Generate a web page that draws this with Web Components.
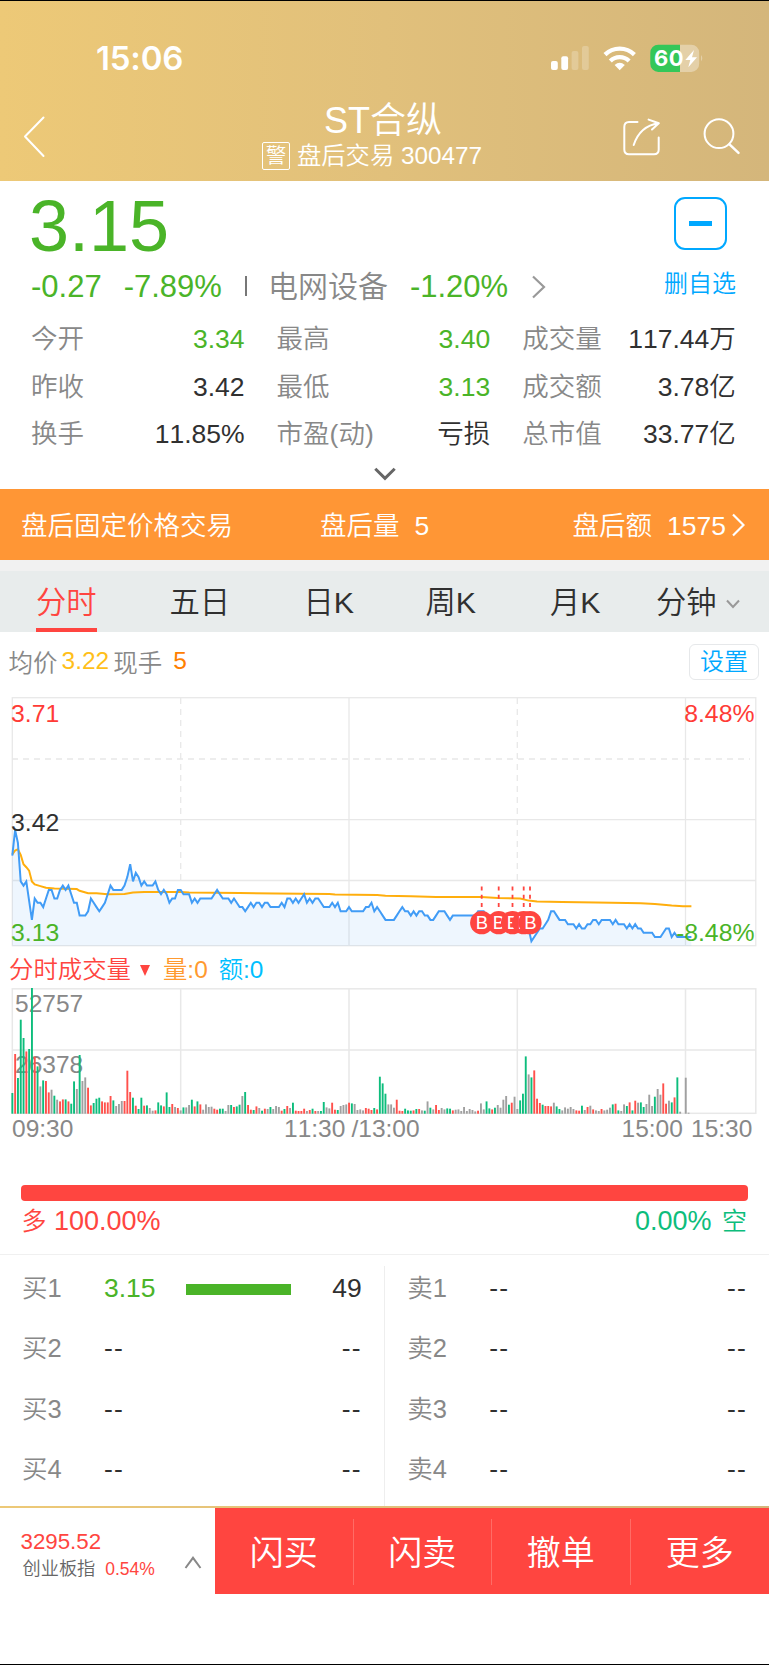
<!DOCTYPE html>
<html lang="zh-CN">
<head>
<meta charset="UTF-8">
<title>ST合纵 300477</title>
<style>
    html, body { margin: 0; padding: 0; background: #fff; }
    body {
        width: 769px;
        height: 1665px;
        overflow: hidden;
        font-family: "Liberation Sans", "Noto Sans CJK SC", sans-serif;
        font-weight: 350;
        font-kerning: none;
        --green: #4ab428;
        --red: #ff4540;
        --gray: #888;
        --ink: #303030;
        --blue: #00a8ff;
        --teal: #0dbd7c;
        --gold: linear-gradient(90deg, #edc977 0%, #e1c07b 50%, #d4b67b 100%);
    }
</style>
</head>
<body>
<stock-page></stock-page>
<script>
class StatusBar extends HTMLElement {
    constructor() {
        super();
        this.attachShadow({ mode: 'open' });
    }
    connectedCallback() {
        this.shadowRoot.innerHTML = `
            <style>
                :host {
                    display: flex;
                    justify-content: space-between;
                    align-items: center;
                    height: 113px;
                    padding: 1px 64px 0 96px;
                    box-sizing: border-box;
                    color: #fff;
                }
                .time {
                    font: 600 33px/40px Inter, sans-serif;
                    letter-spacing: -0.2px;
                }
                svg { display: block; }
            </style>
            <div class="time">15:06</div>
            <svg width="155" height="30" viewBox="550 42 155 30">
                <g fill="#fff">
                    <rect x="551" y="60" width="6.8" height="9" rx="2"/>
                    <rect x="561.3" y="55.3" width="6.8" height="13.7" rx="2"/>
                    <rect x="571.6" y="50" width="6.8" height="19" rx="2" opacity=".22"/>
                    <rect x="582" y="45" width="6.8" height="24" rx="2" opacity=".22"/>
                    <path d="M619.7 69.2 L614.6 63.9 Q619.7 59.4 624.8 63.9 Z"/>
                </g>
                <g fill="none" stroke="#fff" stroke-width="4.3">
                    <path d="M605 53.6 A21 21 0 0 1 634.4 53.6"/>
                    <path d="M610.3 60 A13.3 13.3 0 0 1 629.1 60"/>
                </g>
                <path d="M658.5 43.7 H680 V70.9 H658.5 A8 8 0 0 1 650.3 62.7 V52 A8 8 0 0 1 658.5 43.7Z" fill="#34c759"/>
                <path d="M680 43.7 H691 A8 8 0 0 1 699.2 52 V62.7 A8 8 0 0 1 691 70.9 H680Z" fill="#fff" opacity=".34"/>
                <path d="M701 54 Q703.6 57.2 701 60.5Z" fill="#fff" opacity=".34"/>
                <text x="654" y="65.3" font-family="Inter, sans-serif" font-weight="700" font-size="22" textLength="29.5" fill="#fff">60</text>
                <path d="M694 49 L685.3 59 H690.3 L688.3 66.3 L697 56.3 H692 Z" fill="#fff"/>
            </svg>
        `;
    }
}
customElements.define('status-bar', StatusBar);

class TitleBar extends HTMLElement {
    constructor() {
        super();
        this.attachShadow({ mode: 'open' });
    }
    connectedCallback() {
        this.shadowRoot.innerHTML = `
            <style>
                :host {
                    display: flex;
                    height: 82px;
                    margin-top: -14px;
                    padding: 0 27px 0 22px;
                    color: #fff;
                }
                svg { display: block; fill: none; stroke: #fff; stroke-width: 2; stroke-linecap: round; stroke-linejoin: round; }
                .back { margin: 15.5px 216px 0 0; }
                .tools { margin: 17.5px 0 0 auto; }
                .name { font-size: 36px; line-height: 42px; text-align: center; padding-left: 22px; }
                .sub { display: flex; align-items: center; font-size: 24.3px; line-height: 30px; margin-top: -1px; }
                .warn {
                    width: 26px;
                    height: 26px;
                    border: 1.3px solid #fff;
                    border-radius: 2px;
                    font-size: 20.5px;
                    line-height: 25px;
                    text-align: center;
                    margin-right: 7px;
                }
            </style>
            <svg class="back" width="24" height="42" viewBox="22 116 24 42"><path d="M43.5 117.5 L25 136.5 L43.5 156"/></svg>
            <div class="center">
                <div class="name"><slot name="name"></slot></div>
                <div class="sub"><span class="warn">警</span><slot></slot></div>
            </div>
            <svg class="tools" width="120" height="38" viewBox="622 118 120 38">
                <path d="M637.5 122 H629 Q624.3 122 624.3 127 V149.5 Q624.3 154.3 629 154.3 H654 Q658.7 154.3 658.7 149.5 V137.5"/>
                <path d="M633.7 145 Q640 126 658.5 123.3 M648.6 119.6 L658.8 123.3 L652 129.5"/>
                <circle cx="719" cy="133.7" r="14.4"/>
                <path d="M729.5 144.3 L738.5 152.8" stroke-width="2.5"/>
            </svg>
        `;
    }
}
customElements.define('title-bar', TitleBar);

class QuoteItem extends HTMLElement {
    constructor() {
        super();
        this.attachShadow({ mode: 'open' });
    }
    connectedCallback() {
        const label = this.getAttribute('label') || '';
        this.shadowRoot.innerHTML = `
            <style>
                :host {
                    display: flex;
                    justify-content: space-between;
                    font-size: 26.5px;
                    line-height: 47.7px;
                    color: var(--ink);
                    white-space: nowrap;
                }
                :host([down]) { color: var(--green); }
                .label { color: var(--gray); }
            </style>
            <span class="label">${label}</span>
            <span><slot></slot></span>
        `;
    }
}
customElements.define('quote-item', QuoteItem);

class QuoteSummary extends HTMLElement {
    constructor() {
        super();
        this.attachShadow({ mode: 'open' });
    }
    connectedCallback() {
        this.shadowRoot.innerHTML = `
            <style>
                :host { display: block; height: 308px; padding: 0 32px 0 31px; box-sizing: border-box; }
                .top { display: flex; justify-content: space-between; height: 135px; }
                .price { font-size: 72px; line-height: 80px; color: var(--green); margin-top: 5px; margin-left: -2px; }
                .change {
                    display: flex;
                    align-items: center;
                    font-size: 31px;
                    line-height: 36px;
                    color: var(--green);
                    margin-top: 3px;
                }
                .change .pct { margin-left: 22px; }
                .sep { width: 2px; height: 20px; background: #777; margin: 0 21px 2px 23px; }
                .sector { font-size: 30px; color: var(--gray); margin-right: 22px; }
                .change svg { margin-left: 24px; }
                .fav { display: flex; flex-direction: column; align-items: center; color: var(--blue); font-size: 24px; margin: 16px 1px 0 0; }
                .minus {
                    display: flex;
                    align-items: center;
                    justify-content: center;
                    width: 49px;
                    height: 49px;
                    border: 2px solid var(--blue);
                    border-radius: 11px;
                    margin-bottom: 18px;
                }
                .minus i { width: 23px; height: 4.5px; background: var(--blue); }
                .fav span { line-height: 32px; }
                .grid { display: grid; grid-template-columns: repeat(3, 213.6px); column-gap: 32px; }
                .more { display: block; margin: 7.5px auto 0; position: relative; left: 0.5px; }
            </style>
            <div class="top">
                <div>
                    <div class="price">3.15</div>
                    <div class="change">
                        <span>-0.27</span><span class="pct">-7.89%</span>
                        <i class="sep"></i>
                        <span class="sector">电网设备</span><span>-1.20%</span>
                        <svg width="14" height="24" viewBox="0 0 14 24"><path d="M1 1.5 L12 12 L1 22.5" fill="none" stroke="#999" stroke-width="2.2"/></svg>
                    </div>
                </div>
                <div class="fav"><div class="minus"><i></i></div><span>删自选</span></div>
            </div>
            <div class="grid"><slot></slot></div>
            <svg class="more" width="24" height="14" viewBox="0 0 24 14"><path d="M2.3 1.8 L12 11.3 L21.7 1.8" fill="none" stroke="#666" stroke-width="3"/></svg>
        `;
    }
}
customElements.define('quote-summary', QuoteSummary);

class AfterHoursBar extends HTMLElement {
    constructor() {
        super();
        this.attachShadow({ mode: 'open' });
    }
    connectedCallback() {
        this.shadowRoot.innerHTML = `
            <style>
                :host {
                    display: flex;
                    align-items: center;
                    height: 71px;
                    padding: 0 24px 0 21px;
                    background: #ff9635;
                    color: #fff;
                    font-size: 26.5px;
                    border-bottom: 11px solid #f1f1f1;
                    white-space: pre;
                }
                span { padding-bottom: 2px; }
                .vol { margin-left: 87px; }
                .amt { margin-left: auto; }
                b { font-weight: inherit; margin-left: 15px; }
                svg { margin-left: 6px; }
            </style>
            <span>盘后固定价格交易</span>
            <span class="vol">盘后量<b>5</b></span>
            <span class="amt">盘后额<b>1575</b></span>
            <svg width="13" height="24" viewBox="0 0 13 24"><path d="M1 1.5 L11.5 12 L1 22.5" fill="none" stroke="#fff" stroke-width="2.2"/></svg>
        `;
    }
}
customElements.define('after-hours-bar', AfterHoursBar);

class PeriodTabs extends HTMLElement {
    constructor() {
        super();
        this.attachShadow({ mode: 'open' });
    }
    connectedCallback() {
        this.shadowRoot.innerHTML = `
            <style>
                :host {
                    display: grid;
                    grid-template-columns: 133.5px 134px 122px 124.5px 106px auto;
                    height: 61px;
                    padding-left: 36px;
                    background: #e8ecec;
                    color: var(--ink);
                    font-size: 30.3px;
                    line-height: 63px;
                }
                span { justify-self: start; white-space: nowrap; }
                .on { color: var(--red); height: 57px; border-bottom: 4px solid var(--red); }
                svg { margin: 0 0 4px 9px; }
            </style>
            <span class="on">分时</span><span>五日</span><span>日K</span><span>周K</span><span>月K</span>
            <span>分钟<svg width="14" height="10" viewBox="0 0 14 10"><path d="M1 1.5 L7 8 L13 1.5" fill="none" stroke="#999" stroke-width="2"/></svg></span>
        `;
    }
}
customElements.define('period-tabs', PeriodTabs);

// x of minute n (0 = 09:30, 240 = 15:00)
const minuteX = n => 12.3 + n * 2.806;

// closing price of each minute, in cents above 3.13
const PRICES = [
    21,27,24,15,14,15,10.5,6,11,10,10,9,11,13,13,11,11,13,14,13,14,12,10,10,7,7,7,8,11,10,
    9,8,9,10,12,14,13,13,13,13,14,16,19,15,17,16,14,15,14,14,14,15,13,12,13,12,10,11,11,13,
    13,12,12,12,10,11,10,11,11,11,11,11,12,13,12,11,11,11,10,11,10,9,9,8,9,10,9,10,10,9,
    10,10,9,9,9,9,10,9,11,11,10,11,10,11,12,10,11,10,11,11,10,9,9,9,10,9,10,8,8,8,
    9,8,8,8,8,8,9,9,10,8,9,8,7,6,6,6,6,7,8,9,8,8,7,8,7,8,8,7,7,6,
    6,7,8,8,8,7,6,7,7,7,7,7,7,7,7,7,8,8,8,7,7,7,6,6,6,7,7,6,6,5,
    5,5,5,4,4,1,2,3,4,4,5,6,8,8,7,6,6,6,5,5,5,4,5,4,4,5,5,6,6,5,
    6,6,6,6,5,6,5,5,5,4,5,4,5,4,4,3,3,3,3,2,2,2,3,4,4,2,3,2,2,2,
    2,2,2
];

// average price: [minute, cents above 3.13]
const AVERAGE = [
    [0,21.3],[1,22.2],[2,22.5],[3,21.2],[4,19],[5,18.3],[6,17.5],[7,15],[8,14.3],[10,13.9],[12,13.5],
    [15,13.3],[23,13.2],[24,12.8],[27,12.2],[30,12.2],[34,12],[40,12.05],[43,12.4],[47,12.5],[60,12.5],
    [63,12.4],[81,12.3],[94,12.15],[113,12.05],[115,11.9],[130,11.8],[133,11.65],[142,11.5],[151,11.35],
    [167,11.35],[173,11.1],[181,11],[184,10.5],[187,10.3],[196,10.2],[208,10.05],[219,9.95],[224,9.9],
    [229,9.7],[235,9.35],[239,9.2],[242,9.2]
];

// volume per minute: colour (g down, r up, n flat) and height
const VOLUMES = `g62 r179 g107 g282 g227 r187 g194 g377 r171 g142 n82 g100 r98 r64 n72 g54 n42 r37 r43 g43
    r37 g30 g97 n74 g176 n98 n109 r78 r25 g32 g45 g48 r37 r34 r34 r53 g40 n23 n29 n38
    r38 r129 r65 g48 r24 g14 g48 r24 g25 n17 n9 r10 g34 g25 r22 g64 g20 r29 n20 r17
    n10 g19 n19 n26 g42 r22 g37 r28 n12 n28 n20 n21 r15 r12 g15 g15 n8 n26 g26 r20
    g22 g27 n53 g65 r26 r12 g11 r22 n17 g9 r15 n14 g20 n14 n23 n20 r9 g14 r23 n17
    g33 r9 r8 r8 r15 n8 r11 g15 r8 n8 g8 g35 n19 n16 r33 r12 g11 n23 n26 n28
    r33 g31 n29 n11 n13 n10 r17 r15 r11 g17 r13 g111 g91 g60 n28 n28 n18 r42 r9 r8
    g15 g10 g9 r10 g14 r14 n10 g9 n37 g18 n13 r26 r11 n17 n13 g16 g15 r10 n12 n13
    n8 n20 n8 n14 n11 n7 r9 n31 n13 g37 g16 r13 g18 n26 n18 n42 n53 g27 r33 n51
    n14 g40 g60 g172 n118 g109 r130 r45 r32 g27 r23 r23 r22 n33 g22 g14 n10 n19 n15 n20
    n14 r10 r9 g24 n11 r20 n24 r13 n10 n8 r14 n10 n12 n18 g28 r30 g10 n8 n28 g23
    r34 g10 r39 n33 g34 g20 n29 n57 n23 g51 n74 n57 r91 r30 n39 g34 r49 g109 n6 n0
    n108 n3`.split(/\s+/);

class PriceChart extends HTMLElement {
    constructor() {
        super();
        this.attachShadow({ mode: 'open' });
    }
    connectedCallback() {
        const y = level => (248.6 - level * 4.283).toFixed(1);
        const line = PRICES.map((p, i) => `${minuteX(i).toFixed(1)},${y(p)}`).join(' ');
        const avg = AVERAGE.map(([i, p]) => `${minuteX(i).toFixed(1)},${y(p)}`).join(' ');
        const trades = [481.7, 498.7, 512.5, 523.7, 530];
        const right = minuteX(PRICES.length - 1);

        this.shadowRoot.innerHTML = `
            <style>
                :host { display: block; height: 316px; }
                .legend {
                    display: flex;
                    align-items: center;
                    height: 62px;
                    padding: 0 10px 3px 8.5px;
                    font-size: 24.5px;
                    color: var(--gray);
                    box-sizing: content-box;
                    height: 59px;
                }
                .legend span { padding-bottom: 1px; }
                .avg { color: #ffbf1a; margin: 0 4px; }
                .hand { color: #ff8000; margin-left: 11px; }
                .set {
                    margin-left: auto;
                    margin-top: 1px;
                    width: 68px;
                    height: 34px;
                    line-height: 34px;
                    text-align: center;
                    border: 1.5px solid #e6e8ea;
                    border-radius: 6px;
                    color: var(--blue);
                    font-size: 24px;
                }
                svg { display: block; margin-top: 3px; font-size: 24.8px; overflow: visible; }
            </style>
            <div class="legend">
                <span>均价</span><span class="avg">3.22</span><span>现手</span><span class="hand">5</span>
                <div class="set">设置</div>
            </div>
            <svg width="769" height="251" viewBox="0 0 769 251">
                <g fill="none" stroke="#e8e8e8" stroke-width="1.3">
                    <rect x="12.3" y=".7" width="743.5" height="248"/>
                    <path d="M12 62 H750 M180.7 1 V183 M517.3 1 V183" stroke-dasharray="6 5"/>
                    <path d="M12 122.6 H756 M12 183.5 H756 M349 1 V249 M685.5 1 V249"/>
                </g>
                <polygon points="12.3,248.7 ${line} ${right},248.7" fill="#3f9cf5" fill-opacity=".09"/>
                <polyline points="${avg}" fill="none" stroke="#ffae0d" stroke-width="2"/>
                <polyline points="${line}" fill="none" stroke="#419cf6" stroke-width="2"/>
                ${trades.map(x => `
                    <path d="M${x} 189.5 V210.5" stroke="#ff4540" stroke-width="1.8" stroke-dasharray="4 4.3"/>
                    <circle cx="${x}" cy="225.7" r="11.6" fill="#ff4540"/>
                    <text x="${x + 0.3}" y="232.3" text-anchor="middle" font-size="18.5" fill="#fff">B</text>
                `).join('')}
                <g text-anchor="start">
                    <text x="11" y="24.5" fill="#ff3b36">3.71</text>
                    <text x="11" y="134" fill="#303030">3.42</text>
                    <text x="11" y="243.5" fill="#4ab428">3.13</text>
                </g>
                <g text-anchor="end">
                    <text x="754.5" y="24.5" fill="#ff3b36">8.48%</text>
                    <text x="754.5" y="243.5" fill="#4ab428">-8.48%</text>
                </g>
            </svg>
        `;
    }
}
customElements.define('price-chart', PriceChart);

class VolumeChart extends HTMLElement {
    constructor() {
        super();
        this.attachShadow({ mode: 'open' });
    }
    connectedCallback() {
        const colors = { g: '#0dbd7c', r: '#ff514c', n: '#a0a0a0' };
        const bars = VOLUMES.map((v, i) => {
            const h = Number(v.slice(1)) / 3;
            return `<rect x="${(minuteX(i) - 0.95).toFixed(1)}" y="${(125.7 - h).toFixed(1)}" width="1.9" height="${h.toFixed(1)}" fill="${colors[v[0]]}"/>`;
        }).join('');

        this.shadowRoot.innerHTML = `
            <style>
                :host { display: block; }
                .legend {
                    display: flex;
                    align-items: center;
                    height: 40px;
                    padding: 0 0 0 9px;
                    font-size: 24.4px;
                    line-height: 44px;
                    color: var(--red);
                }
                .legend span { padding-top: 3px; }
                .tri { width: 10px; height: 11px; margin: 5px 13px 0 9px; }
                .vol { color: #ff9a30; }
                .amt { color: #00bfff; margin-left: 11px; }
                svg { display: block; font-size: 24.5px; fill: #888; }
            </style>
            <div class="legend">
                <span>分时成交量</span>
                <svg class="tri" viewBox="0 0 10 11"><path d="M0 0 H10 L5 11Z" fill="#ff4540"/></svg>
                <span class="vol">量:0</span><span class="amt">额:0</span>
            </div>
            <svg width="769" height="157" viewBox="0 0 769 157">
                <g fill="none" stroke="#e8e8e8" stroke-width="1.5">
                    <rect x="12.3" y=".8" width="743.5" height="124.5"/>
                    <path d="M12 62 H756 M180.7 1 V125 M349 1 V125 M517.3 1 V125 M685.5 1 V125"/>
                </g>
                <text x="15" y="23.7">52757</text>
                <text x="15" y="85">26378</text>
                ${bars}
                <text x="12" y="148.7">09:30</text>
                <text x="284" y="148.7">11:30</text>
                <text x="351.5" y="148.7">/13:00</text>
                <text x="621.5" y="148.7">15:00</text>
                <text x="691" y="148.7">15:30</text>
            </svg>
        `;
    }
}
customElements.define('volume-chart', VolumeChart);

class LongShortRatio extends HTMLElement {
    constructor() {
        super();
        this.attachShadow({ mode: 'open' });
    }
    connectedCallback() {
        this.shadowRoot.innerHTML = `
            <style>
                :host {
                    display: block;
                    padding: 40px 21px 0 20.5px;
                    height: 69px;
                    border-bottom: 1.5px solid #f0f0f0;
                }
                .bar { height: 16px; border-radius: 4px; background: var(--red); }
                .text { display: flex; justify-content: space-between; font-size: 27px; line-height: 40px; padding: 0 1px; }
                i { font-style: normal; font-size: 25px; }
                .short i { margin-left: 3px; }
                .long { color: var(--red); }
                .short { color: var(--teal); }
            </style>
            <div class="bar"></div>
            <div class="text">
                <span class="long"><i>多</i> 100.00%</span>
                <span class="short">0.00% <i>空</i></span>
            </div>
        `;
    }
}
customElements.define('long-short-ratio', LongShortRatio);

class BookRow extends HTMLElement {
    constructor() {
        super();
        this.attachShadow({ mode: 'open' });
    }
    connectedCallback() {
        const label = this.getAttribute('label') || '';
        const price = this.getAttribute('price');
        const volume = this.getAttribute('volume');
        this.shadowRoot.innerHTML = `
            <style>
                :host {
                    display: grid;
                    grid-template-columns: 82px 82px 105px 1fr;
                    align-items: center;
                    font-size: 26.5px;
                    line-height: 60.6px;
                    color: var(--ink);
                }
                .label { color: var(--gray); font-size: 25.5px; }
                .price { color: var(--green); }
                .none { letter-spacing: 1.2px; }
                .bar { height: 11px; margin-top: 3px; }
                .bar.fill { background: var(--green); }
                .volume { text-align: right; }
            </style>
            <span class="label">${label}</span>
            <span class="${price ? 'price' : 'none'}">${price || '--'}</span>
            <i class="bar ${price ? 'fill' : ''}"></i>
            <span class="volume ${volume ? '' : 'none'}">${volume || '--'}</span>
        `;
    }
}
customElements.define('book-row', BookRow);

class OrderBook extends HTMLElement {
    constructor() {
        super();
        this.attachShadow({ mode: 'open' });
    }
    connectedCallback() {
        this.shadowRoot.innerHTML = `
            <style>
                :host { display: flex; height: 250.5px; overflow: hidden; }
                .side { flex: 1 1 0; padding: 2.5px 22px 0 22px; }
                .side:first-child { flex: none; width: 340px; padding-right: 21px; padding-left: 21.5px; }
                .line { width: 1.5px; margin-top: 11px; background: #eee; }
            </style>
            <div class="side"><slot name="buy"></slot></div>
            <div class="line"></div>
            <div class="side"><slot name="sell"></slot></div>
        `;
    }
}
customElements.define('order-book', OrderBook);

class TradeBar extends HTMLElement {
    constructor() {
        super();
        this.attachShadow({ mode: 'open' });
    }
    connectedCallback() {
        this.shadowRoot.innerHTML = `
            <style>
                :host { display: block; }
                .gold { height: 2.5px; background: var(--gold); }
                .row { display: flex; height: 86px; }
                .index { display: flex; align-items: center; width: 215px; box-sizing: border-box; padding: 8px 0 0 20.5px; color: var(--red); }
                .value { font-size: 22.3px; line-height: 28px; }
                .name { font-size: 18.2px; line-height: 26px; color: #666; padding-left: 2px; white-space: nowrap; }
                .name b { font-weight: inherit; font-size: 17.5px; color: var(--red); margin-left: 10px; }
                svg { margin: 14px 0 0 29px; }
                .actions { flex: 1; display: grid; grid-template-columns: repeat(4, 1fr); align-items: center; background: var(--red); color: #fff; font-size: 34px; text-align: center; }
                .actions span { line-height: 68px; height: 66px; margin-top: 1px; }
                .actions span:not(:last-child) { box-shadow: 1px 0 #ff6c66; margin-right: 1px; }
            </style>
            <div class="gold"></div>
            <div class="row">
                <div class="index">
                    <div>
                        <div class="value">3295.52</div>
                        <div class="name">创业板指<b>0.54%</b></div>
                    </div>
                    <svg width="18" height="13" viewBox="0 0 18 13"><path d="M1.5 12 L9 1.8 L16.5 12" fill="none" stroke="#888" stroke-width="2"/></svg>
                </div>
                <div class="actions"><span>闪买</span><span>闪卖</span><span>撤单</span><span>更多</span></div>
            </div>
        `;
    }
}
customElements.define('trade-bar', TradeBar);

class StockPage extends HTMLElement {
    constructor() {
        super();
        this.attachShadow({ mode: 'open' });
    }
    connectedCallback() {
        const rows = (slot, word, first) => [1, 2, 3, 4].map(n =>
            `<book-row slot="${slot}" label="${word}${n}" ${n === 1 ? first : ''}></book-row>`).join('');

        this.shadowRoot.innerHTML = `
            <style>
                :host {
                    display: flex;
                    flex-direction: column;
                    height: 1665px;
                    box-sizing: border-box;
                    border-top: 1.5px solid #000;
                    border-bottom: 1.5px solid #000;
                }
                :host > * { flex-shrink: 0; }
                .header { height: 180px; background: var(--gold); }
            </style>
            <div class="header">
                <status-bar></status-bar>
                <title-bar><span slot="name">ST合纵</span>盘后交易 300477</title-bar>
            </div>
            <quote-summary>
                <quote-item label="今开" down>3.34</quote-item>
                <quote-item label="最高" down>3.40</quote-item>
                <quote-item label="成交量">117.44万</quote-item>
                <quote-item label="昨收">3.42</quote-item>
                <quote-item label="最低" down>3.13</quote-item>
                <quote-item label="成交额">3.78亿</quote-item>
                <quote-item label="换手">11.85%</quote-item>
                <quote-item label="市盈(动)">亏损</quote-item>
                <quote-item label="总市值">33.77亿</quote-item>
            </quote-summary>
            <after-hours-bar></after-hours-bar>
            <period-tabs></period-tabs>
            <price-chart></price-chart>
            <volume-chart></volume-chart>
            <long-short-ratio></long-short-ratio>
            <order-book>
                ${rows('buy', '买', 'price="3.15" volume="49"')}
                ${rows('sell', '卖', '')}
            </order-book>
            <trade-bar></trade-bar>
        `;
    }
}
customElements.define('stock-page', StockPage);
</script>
</body>
</html>
